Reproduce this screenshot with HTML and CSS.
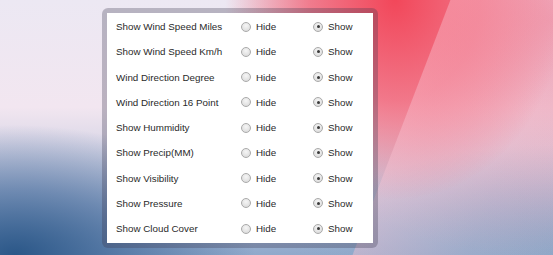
FILE: index.html
```html
<!DOCTYPE html>
<html lang="en">
	<head>
		<meta charset="UTF-8" />
		<title>Weather Display Options</title>
		<link rel="stylesheet" href="styles.css">
	</head>
	<body>
		<div class="frame">
			<form class="panel">
				<div class="row">
					<span class="label">Show Wind Speed Miles</span>
					<label class="opt"><input type="radio" name="windMiles" value="0"> Hide</label>
					<label class="opt"><input type="radio" name="windMiles" value="1" checked> Show</label>
				</div>
				<div class="row">
					<span class="label">Show Wind Speed Km/h</span>
					<label class="opt"><input type="radio" name="windKmh" value="0"> Hide</label>
					<label class="opt"><input type="radio" name="windKmh" value="1" checked> Show</label>
				</div>
				<div class="row">
					<span class="label">Wind Direction Degree</span>
					<label class="opt"><input type="radio" name="windDeg" value="0"> Hide</label>
					<label class="opt"><input type="radio" name="windDeg" value="1" checked> Show</label>
				</div>
				<div class="row">
					<span class="label">Wind Direction 16 Point</span>
					<label class="opt"><input type="radio" name="wind16" value="0"> Hide</label>
					<label class="opt"><input type="radio" name="wind16" value="1" checked> Show</label>
				</div>
				<div class="row">
					<span class="label">Show Hummidity</span>
					<label class="opt"><input type="radio" name="humidity" value="0"> Hide</label>
					<label class="opt"><input type="radio" name="humidity" value="1" checked> Show</label>
				</div>
				<div class="row">
					<span class="label">Show Precip(MM)</span>
					<label class="opt"><input type="radio" name="precip" value="0"> Hide</label>
					<label class="opt"><input type="radio" name="precip" value="1" checked> Show</label>
				</div>
				<div class="row">
					<span class="label">Show Visibility</span>
					<label class="opt"><input type="radio" name="visibility" value="0"> Hide</label>
					<label class="opt"><input type="radio" name="visibility" value="1" checked> Show</label>
				</div>
				<div class="row">
					<span class="label">Show Pressure</span>
					<label class="opt"><input type="radio" name="pressure" value="0"> Hide</label>
					<label class="opt"><input type="radio" name="pressure" value="1" checked> Show</label>
				</div>
				<div class="row">
					<span class="label">Show Cloud Cover</span>
					<label class="opt"><input type="radio" name="cloud" value="0"> Hide</label>
					<label class="opt"><input type="radio" name="cloud" value="1" checked> Show</label>
				</div>
			</form>
		</div>
	</body>
</html>
```

FILE: styles.css
```css
html, body {
	margin: 0;
	width: 553px;
	height: 255px;
	overflow: hidden;
}
body {
	font-family: "Liberation Sans", Arial, sans-serif;
	background:
		linear-gradient(111deg, transparent 420px, rgba(250, 195, 210, 0.42) 421px, rgba(250, 195, 210, 0.12) 530px, transparent 610px),
		radial-gradient(ellipse 170px 200px at 395px 0, #f2475a, rgba(242, 85, 105, 0.7) 50%, rgba(240, 120, 140, 0) 100%),
		radial-gradient(ellipse 320px 240px at 553px 20px, #ec9cb0, rgba(236, 160, 185, 0) 100%),
		radial-gradient(ellipse 240px 130px at 15px 255px, #2b5788, rgba(60, 100, 150, 0.6) 50%, rgba(150, 180, 215, 0) 100%),
		radial-gradient(ellipse 260px 110px at 553px 255px, #8ea8c8, rgba(170, 185, 215, 0) 100%),
		linear-gradient(180deg, #ece8f3 0, #f2e6f0 42%, #c6cbe0 70%, #90a9cb 100%);
	color: #2a2a2a;
}
.frame {
	width: 266px;
	margin: 8px 0 0 102px;
	padding: 5px;
	border-radius: 6px;
	background: rgba(60, 55, 80, 0.3);
}
.panel {
	background: #fff;
	padding: 1px 0 2px 9px;
}
.row {
	display: grid;
	grid-template-columns: 125px 72px 1fr;
	align-items: center;
	height: 25.25px;
	font-size: 9.8px;
}
.opt {
	display: flex;
	align-items: center;
	gap: 5px;
}
.opt input {
	appearance: none;
	-webkit-appearance: none;
	margin: 0;
	width: 10px;
	height: 10px;
	border-radius: 50%;
	border: 1px solid #aaa;
	background: radial-gradient(circle at 50% 35%, #f6f6f6, #d6d6d6);
	box-sizing: border-box;
	position: relative;
}
.opt input:checked::after {
	content: "";
	position: absolute;
	left: 2.5px;
	top: 2.5px;
	width: 3px;
	height: 3px;
	border-radius: 50%;
	background: #3a3a3a;
}
```
